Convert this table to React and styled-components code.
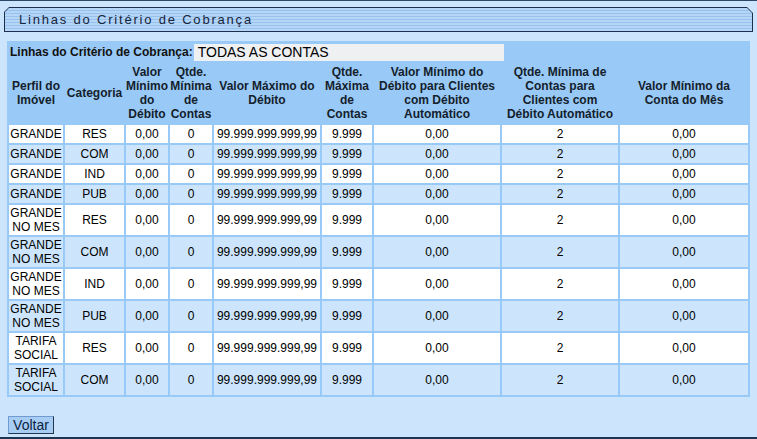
import React from "react";
import styled, { createGlobalStyle } from "styled-components";

const Global = createGlobalStyle`
  html, body { margin: 0; padding: 0; background: #cce5fc; }
  body { font-family: "Liberation Sans", Arial, sans-serif; }
`;

const Page = styled.div`
  box-sizing: border-box;
  height: 439px;
  width: 757px;
  border-top: 1px solid #2a4766;
  border-bottom: 2px solid #1c3552;
  background: #cce5fc;
  display: flex;
  flex-direction: column;
  overflow: hidden;
`;

const TitleOuter = styled.div`
  margin: 6px 4px 0 4px;
  height: 25px;
  padding: 1px;
  box-sizing: border-box;
  background: #1c2f4c;
  clip-path: polygon(5px 0, calc(100% - 6px) 0, 100% 6px, 100% 100%, 0 100%, 0 5px);
`;

const TitleInner = styled.div`
  height: 100%;
  box-sizing: border-box;
  background: repeating-linear-gradient(
    to bottom,
    #b6d6f7 0px,
    #b6d6f7 2px,
    #98c2ee 2px,
    #98c2ee 3px
  );
  clip-path: polygon(4px 0, calc(100% - 5px) 0, 100% 5px, 100% 100%, 0 100%, 0 4px);
  display: flex;
  align-items: center;
  padding-left: 14px;
`;

const TitleText = styled.span`
  font-family: "Liberation Sans", Arial, sans-serif;
  font-size: 13px;
  letter-spacing: 1.8px;
  color: #16243c;
`;

const Table = styled.table`
  margin: 9px 0 0 7px;
  width: 742px;
  table-layout: fixed;
  border-collapse: separate;
  border-spacing: 2px;
  background: #99c9f6;
  font-size: 12px;
  line-height: 14px;
  color: #000;
`;

const InfoCell = styled.td`
  padding: 0 1px;
  height: 18px;
`;

const InfoRow = styled.div`
  display: flex;
  align-items: center;
  gap: 1px;
`;

const InfoLabel = styled.span`
  font-weight: bold;
  color: #111;
`;

const InfoBox = styled.span`
  width: 306px;
  height: 17px;
  background: #eef0f2;
  font-size: 14px;
  line-height: 17px;
  padding-left: 4px;
  color: #000;
`;

const HeadRow = styled.tr`
  height: 60px;
`;

const Th = styled.th`
  padding: 1px 0;
  font-weight: bold;
  text-align: center;
  vertical-align: middle;
  color: #141e2c;
  white-space: nowrap;
`;

const Row = styled.tr`
  height: 18px;
  background: ${(p) => (p.$alt ? "#cce5fc" : "#ffffff")};
`;

const Td = styled.td`
  padding: 1px 0;
  text-align: center;
  vertical-align: middle;
  white-space: nowrap;
  overflow: hidden;
`;

const Footer = styled.div`
  margin: 19px 0 0 8px;
`;

const Button = styled.button`
  width: 46px;
  height: 18px;
  padding: 0;
  font-family: "Liberation Sans", Arial, sans-serif;
  font-size: 14px;
  line-height: 16px;
  color: #0c1e3c;
  background: #a7cdf5;
  border: 1px solid;
  border-color: #6f9bd0 #22374f #22374f #6f9bd0;
  cursor: pointer;
`;

const widths = [54, 59, 42, 42, 106, 50, 126, 116, 128];

const headers = [
  ["Perfil do", "Imóvel"],
  ["Categoria"],
  ["Valor", "Mínimo", "do", "Débito"],
  ["Qtde.", "Mínima", "de", "Contas"],
  ["Valor Máximo do", "Débito"],
  ["Qtde.", "Máxima", "de", "Contas"],
  ["Valor Mínimo do", "Débito para Clientes", "com Débito", "Automático"],
  ["Qtde. Mínima de", "Contas para", "Clientes com", "Débito Automático"],
  ["Valor Mínimo da", "Conta do Mês"],
];

const rows = [
  [["GRANDE"], "RES"],
  [["GRANDE"], "COM"],
  [["GRANDE"], "IND"],
  [["GRANDE"], "PUB"],
  [["GRANDE", "NO MES"], "RES"],
  [["GRANDE", "NO MES"], "COM"],
  [["GRANDE", "NO MES"], "IND"],
  [["GRANDE", "NO MES"], "PUB"],
  [["TARIFA", "SOCIAL"], "RES"],
  [["TARIFA", "SOCIAL"], "COM"],
];

const Lines = ({ lines }) =>
  lines.map((l, i) => (
    <React.Fragment key={i}>
      {i > 0 && <br />}
      {l}
    </React.Fragment>
  ));

export default function App() {
  return (
    <>
      <Global />
      <Page>
        <TitleOuter>
          <TitleInner>
            <TitleText>Linhas do Critério de Cobrança</TitleText>
          </TitleInner>
        </TitleOuter>
        <Table>
          <colgroup>
            {widths.map((w, i) => (
              <col key={i} style={{ width: w }} />
            ))}
          </colgroup>
          <tbody>
            <tr>
              <InfoCell colSpan={9}>
                <InfoRow>
                  <InfoLabel>Linhas do Critério de Cobrança:</InfoLabel>
                  <InfoBox>TODAS AS CONTAS</InfoBox>
                </InfoRow>
              </InfoCell>
            </tr>
            <HeadRow>
              {headers.map((h, i) => (
                <Th key={i}>
                  <Lines lines={h} />
                </Th>
              ))}
            </HeadRow>
            {rows.map(([perfil, cat], i) => (
              <Row key={i} $alt={i % 2 === 1}>
                <Td>
                  <Lines lines={perfil} />
                </Td>
                <Td>{cat}</Td>
                <Td>0,00</Td>
                <Td>0</Td>
                <Td>99.999.999.999,99</Td>
                <Td>9.999</Td>
                <Td>0,00</Td>
                <Td>2</Td>
                <Td>0,00</Td>
              </Row>
            ))}
          </tbody>
        </Table>
        <Footer>
          <Button>Voltar</Button>
        </Footer>
      </Page>
    </>
  );
}
